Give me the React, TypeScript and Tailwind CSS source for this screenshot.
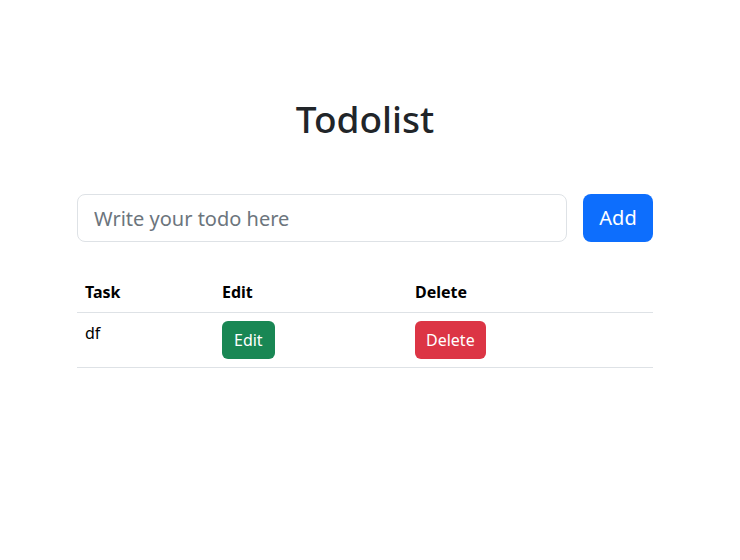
import React, { useState } from 'react';

type Todo = {
    id: number;
    text: string;
};

const App: React.FC = () => {
    const [todos] = useState<Todo[]>([{ id: 1, text: 'df' }]);
    const [value, setValue] = useState<string>('');

    return (
        <div className="min-h-[560px] bg-white font-['Noto_Sans',sans-serif] text-[#212529]">
            <div className="w-[576px] ml-[77px] pt-[97px]">
                <h1 className="text-center text-[37px] leading-[43px] font-medium">Todolist</h1>

                <div className="mt-[54px] flex gap-4">
                    <input
                        type="text"
                        value={value}
                        onChange={(e) => setValue(e.target.value)}
                        placeholder="Write your todo here"
                        className="flex-1 h-[48px] px-4 text-[20px] rounded-[8px] border border-[#dee2e6] placeholder:text-[#6c757d] outline-none"
                    />
                    <button
                        type="button"
                        className="w-[70px] h-[48px] bg-[#0d6efd] text-white text-[20px] rounded-[8px]"
                    >
                        Add
                    </button>
                </div>

                <table className="mt-[30px] w-full border-collapse text-[16px] leading-[24px] text-black">
                    <thead>
                        <tr className="border-b border-[#dee2e6]">
                            <th className="w-[137px] p-2 text-left font-bold">Task</th>
                            <th className="w-[193px] p-2 text-left font-bold">Edit</th>
                            <th className="p-2 text-left font-bold">Delete</th>
                        </tr>
                    </thead>
                    <tbody>
                        {todos.map((t) => (
                            <tr key={t.id} className="border-b border-[#dee2e6]">
                                <td className="p-2 align-top">{t.text}</td>
                                <td className="p-2 align-top">
                                    <button type="button" className="h-[38px] px-3 bg-[#198754] text-white rounded-[6px]">
                                        Edit
                                    </button>
                                </td>
                                <td className="p-2 align-top">
                                    <button type="button" className="h-[38px] px-[11px] bg-[#dc3545] text-white rounded-[6px]">
                                        Delete
                                    </button>
                                </td>
                            </tr>
                        ))}
                    </tbody>
                </table>
            </div>
        </div>
    );
};

export default App;
